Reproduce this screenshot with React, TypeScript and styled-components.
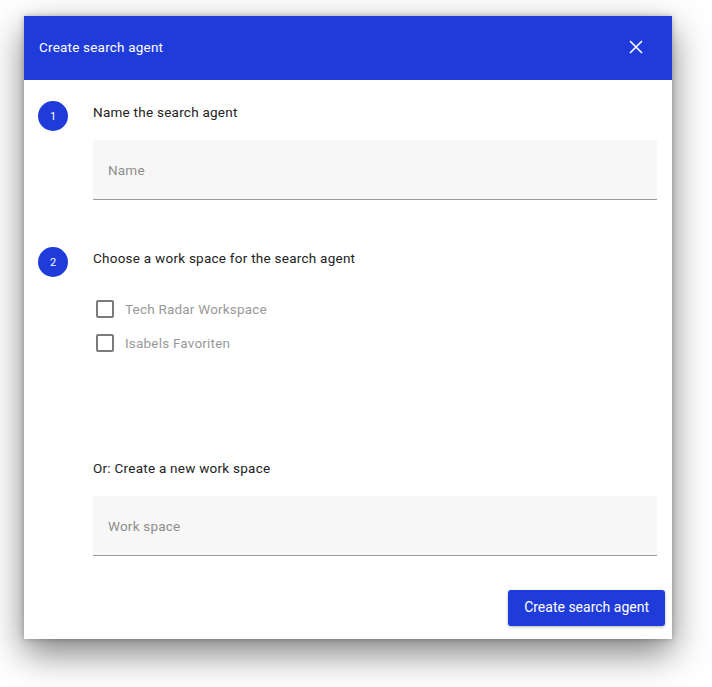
import styled, { createGlobalStyle } from 'styled-components'

const blue = '#1f3cdb'

const GlobalStyle = createGlobalStyle`
    html, body {
        margin: 0;
        padding: 0;
        background: #fff;
        font-family: Roboto, 'Noto Sans', sans-serif;
    }
`

const workspaces = ['Tech Radar Workspace', 'Isabels Favoriten']

const CloseIcon = () => (
    <svg width='14' height='14' viewBox='0 0 14 14' fill='none'>
        <path d='M1 1L13 13M13 1L1 13' stroke='#fff' strokeWidth='1.6' />
    </svg>
)

export default function App() {
    return (
        <Page>
            <GlobalStyle />
            <Dialog>
                <Header>
                    <Title>Create search agent</Title>
                    <CloseButton aria-label='Close'>
                        <CloseIcon />
                    </CloseButton>
                </Header>
                <Body>
                    <Step>
                        <StepNumber>1</StepNumber>
                        <StepContent>
                            <Label>Name the search agent</Label>
                            <Field>
                                <Input placeholder='Name' />
                            </Field>
                        </StepContent>
                    </Step>
                    <Step $gap={47}>
                        <StepNumber>2</StepNumber>
                        <StepContent>
                            <Label>Choose a work space for the search agent</Label>
                            <CheckList>
                                {workspaces.map((name) => (
                                    <CheckRow key={name}>
                                        <Box />
                                        <CheckText>{name}</CheckText>
                                    </CheckRow>
                                ))}
                            </CheckList>
                            <Label $top={98}>Or: Create a new work space</Label>
                            <Field>
                                <Input placeholder='Work space' />
                            </Field>
                        </StepContent>
                    </Step>
                </Body>
                <Footer>
                    <Button>Create search agent</Button>
                </Footer>
            </Dialog>
        </Page>
    )
}

const Page = styled.div`
    padding: 16px 40px 48px 24px;
`

const Dialog = styled.div`
    width: 648px;
    background: #fff;
    box-shadow: 0 14px 34px rgba(0, 0, 0, 0.5), 0 0 6px rgba(0, 0, 0, 0.25);
`

const Header = styled.div`
    display: flex;
    align-items: center;
    justify-content: space-between;
    box-sizing: border-box;
    height: 64px;
    padding: 0 29px 2px 15px;
    background: ${blue};
    color: #fff;
`

const Title = styled.h2`
    margin: 0;
    font-size: 13.5px;
    font-weight: 400;
    letter-spacing: 0.2px;
`

const CloseButton = styled.button`
    display: flex;
    padding: 0;
    border: 0;
    background: none;
    cursor: pointer;
`

const Body = styled.div`
    padding: 21px 15px 0 14px;
`

const Step = styled.div<{ $gap?: number }>`
    display: grid;
    grid-template-columns: 30px 1fr;
    column-gap: 25px;
    margin-top: ${(p) => p.$gap ?? 0}px;
`

const StepNumber = styled.div`
    display: flex;
    align-items: center;
    justify-content: center;
    width: 30px;
    height: 30px;
    border-radius: 50%;
    background: ${blue};
    color: #fff;
    font-size: 11px;
`

const StepContent = styled.div`
    display: flex;
    flex-direction: column;
`

const Label = styled.div<{ $top?: number }>`
    margin-top: ${(p) => p.$top ?? 1}px;
    line-height: 20px;
    font-size: 13.5px;
    letter-spacing: 0.25px;
    color: #222;
`

const Field = styled.div`
    margin-top: 18px;
    height: 59px;
    background: #f7f7f7;
    border-bottom: 1px solid #9b9b9b;
`

const Input = styled.input`
    box-sizing: border-box;
    width: 100%;
    height: 100%;
    padding: 0 15px;
    border: 0;
    outline: none;
    background: transparent;
    font-family: inherit;
    font-size: 13.5px;
    letter-spacing: 0.2px;
    color: #222;
    &::placeholder {
        color: #8e8e8e;
    }
`

const CheckList = styled.div`
    margin-top: 24px;
`

const CheckRow = styled.label`
    display: flex;
    align-items: center;
    height: 34px;
    padding-left: 3px;
`

const Box = styled.span`
    box-sizing: border-box;
    width: 18px;
    height: 18px;
    border: 2px solid #7b7b7b;
    border-radius: 2px;
    margin-right: 11px;
`

const CheckText = styled.span`
    font-size: 13.5px;
    letter-spacing: 0.2px;
    color: #999;
`

const Footer = styled.div`
    display: flex;
    justify-content: flex-end;
    padding: 34px 7px 13px;
`

const Button = styled.button`
    box-sizing: border-box;
    height: 36px;
    padding: 0 16px 3px;
    border: 0;
    border-radius: 3px;
    background: ${blue};
    color: #fff;
    font-family: inherit;
    font-size: 14px;
    box-shadow: 0 1px 3px rgba(0, 0, 0, 0.3);
    cursor: pointer;
`
